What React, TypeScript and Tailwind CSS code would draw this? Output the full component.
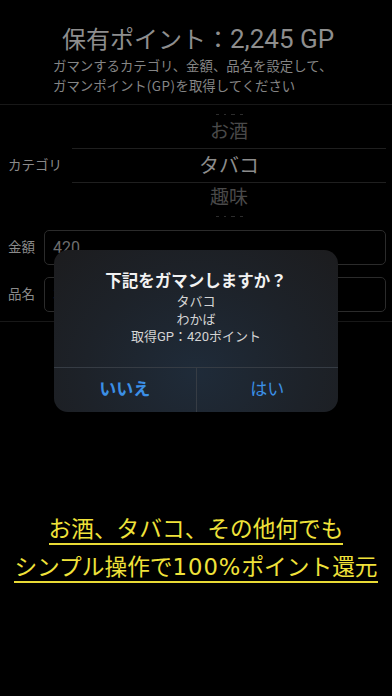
const jp = { fontFamily: '"Roboto", "Noto Sans CJK JP", sans-serif' };
const cjk = { fontFamily: '"Noto Sans CJK JP", sans-serif' };

const PickerRow = ({ label, active }: { label: string; active?: boolean }) => (
  <div
    className={`flex items-center justify-center ${
      active ? "h-[33px] text-[20px] text-[#8c8c8c]" : "h-[32px] text-[19px] text-[#4a4a4a]"
    }`}
  >
    {label}
  </div>
);

// fragments of the picker rows rolled out of sight
const Sliver = () => (
  <div className="h-[4px] flex items-center justify-center gap-[5px]">
    <div className="w-[3px] h-[1px] bg-[#2c2c2c]" />
    <div className="w-[2px] h-[1px] bg-[#2c2c2c]" />
    <div className="w-[4px] h-[1px] bg-[#2c2c2c]" />
    <div className="w-[3px] h-[1px] bg-[#2c2c2c]" />
  </div>
);

const Field = ({ label, value }: { label: string; value: string }) => (
  <div className="flex items-center">
    <span className="w-[44px] pl-2 text-[13.5px] text-[#8a8a8a]">{label}</span>
    <div className="flex-1 h-[35px] mr-[6px] rounded-[5px] border border-[#2b2b2b] flex items-center px-2 text-[16px] text-[#6e6e6e]">
      {value}
    </div>
  </div>
);

export default function App() {
  return (
    <div className="relative w-full h-[696px] bg-black overflow-hidden" style={jp}>
      {/* header */}
      <div className="pt-[24px] pb-[9px] border-b border-[#181818]">
        <h1 className="text-center text-[24px] leading-[30px] text-[#8e8e8e] pl-[4px]">
          保有ポイント：<span className="text-[26px]">2,245 GP</span>
        </h1>
        <p className="pl-[53px] text-[13.4px] leading-[20px] text-[#858585]" style={cjk}>
          ガマンするカテゴリ、金額、品名を設定して、
          <br />
          ガマンポイント<span className="tracking-[0.5px]">(GP)</span>を取得してください
        </p>
      </div>

      {/* category picker */}
      <div className="flex items-center pt-[7px]">
        <span className="w-[72px] pl-2 text-[13.5px] text-[#8a8a8a]">カテゴリ</span>
        <div className="flex-1 mr-[6px]">
          <Sliver />
          <PickerRow label="お酒" />
          <div className="border-y border-[#1f1f1f]">
            <PickerRow label="タバコ" active />
          </div>
          <div className="h-[31px] flex items-center justify-center text-[19px] text-[#4a4a4a]">
            趣味
          </div>
          <Sliver />
        </div>
      </div>

      {/* inputs */}
      <div className="mt-[12px] pb-[9px] border-b border-[#181818] flex flex-col gap-[12px]">
        <Field label="金額" value="420" />
        <Field label="品名" value="わかば" />
      </div>

      {/* promo */}
      <div className="mt-[195px] flex flex-col items-center gap-[9px] text-[#f0e23a] text-[22.7px] leading-[26px]">
        <span className="inline-block border-b-2 border-[#e8da35]">お酒、タバコ、その他何でも</span>
        <span className="inline-block border-b-2 border-[#e8da35]">
          シンプル操作で
          <span className="tracking-[1px]" style={{ fontFamily: '"DejaVu Sans", sans-serif' }}>
            100%
          </span>
          ポイント還元
        </span>
      </div>

      {/* alert */}
      <div className="absolute left-[54px] top-[250px] w-[284px] h-[162px] rounded-[14px] overflow-hidden flex flex-col bg-[radial-gradient(ellipse_at_50%_75%,#1f2b39_0%,#1d2229_55%,#1c1c1e_100%)]">
        <div className="flex-1 flex flex-col items-center pt-[21px]">
          <h2 className="text-[16.5px] leading-[22px] font-bold text-[#f2f2f2]">下記をガマンしますか？</h2>
          <div className="text-center text-[13px] leading-[17.5px] text-[#d4d4d4]">
            <p>タバコ</p>
            <p>わかば</p>
            <p>取得GP：420ポイント</p>
          </div>
        </div>
        <div className="h-[45px] flex border-t border-[#363c44]">
          <button className="flex-1 text-[17px] font-bold text-[#3b8fe6] border-r border-[#363c44]">いいえ</button>
          <button className="flex-1 text-[17px] text-[#3b8fe6]">はい</button>
        </div>
      </div>
    </div>
  );
}
